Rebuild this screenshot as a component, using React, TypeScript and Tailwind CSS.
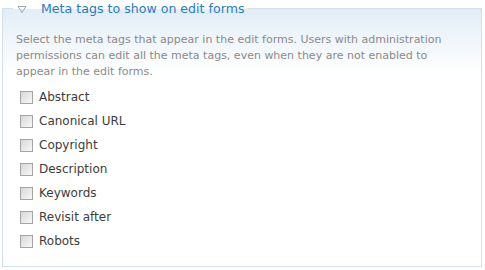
const tags = [
  "Abstract",
  "Canonical URL",
  "Copyright",
  "Description",
  "Keywords",
  "Revisit after",
  "Robots",
];

export default function App() {
  return (
    <div className="w-[485px] h-[270px] bg-white pl-[2px] pr-[3px] font-['DejaVu_Sans',Verdana,sans-serif]">
      <fieldset className="w-[480px] h-[267px] border border-[#d3dfe9] bg-gradient-to-b from-[#e2edf7] via-white via-[25%] to-white px-[13px] pt-[16px] pb-[12px]">
        <legend className="ml-[-3px] px-[3px] h-[16px] leading-[16px]">
          <span className="inline-flex items-center">
            <svg width="10" height="8" viewBox="0 0 10 8" className="ml-[1px]">
              <path d="M1 1.5h8L5 7.5z" fill="none" stroke="#9aa6b0" strokeWidth="1" />
            </svg>
            <span className="ml-[14px] text-[12.6px] text-[#2b7bc0]">Meta tags to show on edit forms</span>
          </span>
        </legend>
        <p className="text-[11px] leading-[16px] text-[#8a8a8a]">
          Select the meta tags that appear in the edit forms. Users with administration permissions can edit all the meta tags, even when they are not enabled to appear in the edit forms.
        </p>
        <div className="mt-[5px] flex flex-col">
          {tags.map((t) => (
            <label key={t} className="h-[24px] flex items-center">
              <span className="ml-[4px] w-[13px] h-[13px] border border-[#a4a4a4] bg-gradient-to-br from-[#d8d8d8] to-[#f8f8f8] shrink-0" />
              <span className="ml-[6px] text-[12px] text-[#3c3c3c]">{t}</span>
            </label>
          ))}
        </div>
      </fieldset>
    </div>
  );
}
